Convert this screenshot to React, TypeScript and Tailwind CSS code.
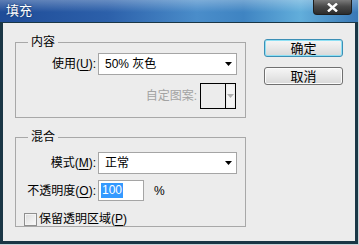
import React from 'react'

const font = "font-['Liberation_Sans','Noto_Sans_CJK_SC',sans-serif]"

function DownArrow({ color = '#000' }: { color?: string }) {
  return (
    <svg width="7" height="4" viewBox="0 0 7 4">
      <path d="M0 0h7L3.5 4z" fill={color} />
    </svg>
  )
}

function Select({ value }: { value: string }) {
  return (
    <div className="flex h-[22px] w-[139px] items-center justify-between border border-[#a5a5a5] bg-white pl-[6px] pr-[4px]">
      <span className="leading-none">{value}</span>
      <DownArrow />
    </div>
  )
}

function Label({ text, u, gray }: { text: string; u: string; gray?: boolean }) {
  return (
    <span className={`w-[80px] shrink-0 text-right ${gray ? 'text-[#a3a3a3]' : 'text-black'}`}>
      {text}
      {u ? (
        <>
          (<span className="underline underline-offset-2">{u}</span>):
        </>
      ) : null}
    </span>
  )
}

function Button({ children, focused }: { children: React.ReactNode; focused?: boolean }) {
  return (
    <button
      type="button"
      className={`h-[18px] w-[79px] rounded-[3px] border bg-[linear-gradient(to_bottom,#f6f6f6,#e8e8e8_50%,#d8d8d8)] text-[13px] leading-none text-black ${
        focused
          ? 'border-[#3c8fb5] shadow-[inset_0_0_0_1px_#8ee0f4]'
          : 'border-[#707070] shadow-[inset_0_0_0_1px_#fbfbfb]'
      }`}
    >
      {children}
    </button>
  )
}

export default function App() {
  return (
    <div className={`h-[245px] w-[359px] bg-[#c9d4d8] text-[12px] ${font}`}>
      <div className="flex h-[244px] w-[358px] flex-col">
        {/* title bar */}
        <div className="flex h-[22px] shrink-0 items-start justify-between bg-[linear-gradient(to_bottom,rgba(255,255,255,0.28),rgba(255,255,255,0)_55%),linear-gradient(to_right,#1f4c98_0%,#2c60aa_30%,#4a8dca_55%,#3f84c2_68%,#62aedb_84%,#3a78b6_100%)]">
          <span className="ml-[6px] mt-[3px] text-[13px] leading-[16px] text-white [text-shadow:0_0_2px_#0b2a5a]">
            填充
          </span>
          <div className="mr-[6px] flex h-[15px] w-[39px] items-center justify-center rounded-b-[4px] border border-t-0 border-[#1e1e1e] bg-[linear-gradient(to_bottom,#7a7a7a,#4a4a4a_45%,#2c2c2c)]">
            <svg width="11" height="9" viewBox="0 0 11 9">
              <path d="M1 0.5 L10 8.5 M10 0.5 L1 8.5" stroke="#fff" strokeWidth="2.4" />
            </svg>
          </div>
        </div>

        {/* client */}
        <div className="flex flex-1 border-x-[3px] border-b-[3px] border-t border-[#1a3645] bg-[#ececec]">
          <div className="flex flex-col pl-[12px] pt-[12px]">
            <fieldset className="h-[83px] w-[231px] border border-[#a8a8a8]">
              <legend className="ml-[12px] px-[3px] leading-[14px]">内容</legend>
              <div className="flex flex-col gap-[8px] pt-[4px]">
                <div className="flex items-center gap-[2px]">
                  <Label text="使用" u="U" />
                  <Select value="50% 灰色" />
                </div>
                <div className="flex items-center justify-end pr-[9px]">
                  <span className="mr-[3px] text-[#a3a3a3]">自定图案:</span>
                  <div className="flex h-[26px] w-[36px] border border-black">
                    <div className="w-[25px] border-r border-black" />
                    <div className="flex flex-1 items-center justify-center">
                      <div className="flex h-[22px] w-[7px] items-center justify-center rounded-[2px] bg-[#f4f4f4]">
                        <DownArrow color="#b0b0b0" />
                      </div>
                    </div>
                  </div>
                </div>
              </div>
            </fieldset>

            <fieldset className="mt-[12px] h-[97px] w-[231px] border border-[#a8a8a8]">
              <legend className="ml-[12px] px-[3px] leading-[14px]">混合</legend>
              <div className="flex flex-col pt-[8px]">
                <div className="flex items-center gap-[2px]">
                  <Label text="模式" u="M" />
                  <Select value="正常" />
                </div>
                <div className="mt-[6px] flex items-center gap-[2px]">
                  <Label text="不透明度" u="O" />
                  <div className="flex h-[21px] w-[46px] items-center border border-[#a5a5a5] bg-white pl-[2px]">
                    <span className="bg-[#3399ff] px-[1px] leading-[15px] text-white">100</span>
                  </div>
                  <span className="ml-[8px]">%</span>
                </div>
                <div className="mt-[9px] flex items-center gap-[2px] pl-[8px]">
                  <span className="h-[13px] w-[13px] border border-[#8f8f8f] bg-[linear-gradient(135deg,#dcdcdc,#fbfbfb)] shadow-[inset_0_0_0_1px_#f4f4f4]" />
                  <span>
                    保留透明区域(<span className="underline underline-offset-2">P</span>)
                  </span>
                </div>
              </div>
            </fieldset>
          </div>

          <div className="ml-[18px] flex flex-col gap-[10px] pt-[16px]">
            <Button focused>确定</Button>
            <Button>取消</Button>
          </div>
        </div>
      </div>
    </div>
  )
}
